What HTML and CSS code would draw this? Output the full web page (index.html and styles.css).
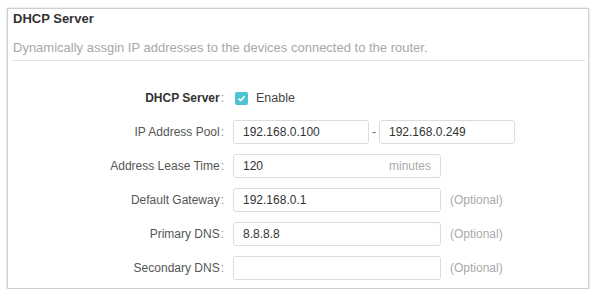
FILE: index.html
```html
<!DOCTYPE html>
<html lang="en">
<head>
  <meta charset="UTF-8" />
  <title>DHCP Server</title>
  <link rel="stylesheet" href="styles.css">
</head>
<body>
  <div class="panel">
    <h2 class="panel-title">DHCP Server</h2>
    <p class="panel-desc">Dynamically assgin IP addresses to the devices connected to the router.</p>
    <div class="form">
      <div class="row">
        <label class="lbl strong">DHCP Server<span class="colon">:</span></label>
        <div class="field">
          <span class="check">
            <svg width="9" height="9" viewBox="0 0 9 9"><path d="M1.5 4.6 L3.6 6.6 L7.6 2.3" fill="none" stroke="#fff" stroke-width="1.6"/></svg>
          </span>
          <span class="check-text">Enable</span>
        </div>
      </div>
      <div class="row">
        <label class="lbl">IP Address Pool<span class="colon">:</span></label>
        <div class="field">
          <span class="box short">192.168.0.100</span>
          <span class="dash">-</span>
          <span class="box short">192.168.0.249</span>
        </div>
      </div>
      <div class="row">
        <label class="lbl">Address Lease Time<span class="colon">:</span></label>
        <div class="field">
          <span class="box long">120<span class="unit">minutes</span></span>
        </div>
      </div>
      <div class="row">
        <label class="lbl">Default Gateway<span class="colon">:</span></label>
        <div class="field">
          <span class="box long">192.168.0.1</span>
          <span class="hint">(Optional)</span>
        </div>
      </div>
      <div class="row">
        <label class="lbl">Primary DNS<span class="colon">:</span></label>
        <div class="field">
          <span class="box long">8.8.8.8</span>
          <span class="hint">(Optional)</span>
        </div>
      </div>
      <div class="row">
        <label class="lbl">Secondary DNS<span class="colon">:</span></label>
        <div class="field">
          <span class="box long"></span>
          <span class="hint">(Optional)</span>
        </div>
      </div>
    </div>
  </div>
</body>
</html>
```

FILE: styles.css
```css
body {
  margin: 0;
  background: #fff;
  font-family: "Liberation Sans", Arial, sans-serif;
  font-size: 12px;
  color: #333;
}
.panel {
  margin: 8px 14px 0 7px;
  height: 279px;
  border: 1px solid #cfcfcf;
  box-shadow: 0 0 2px rgba(0,0,0,0.18);
}
.panel-title {
  margin: 0;
  padding: 1px 0 0 5px;
  height: 18px;
  line-height: 18px;
  font-size: 13px;
  font-weight: bold;
  color: #333;
}
.panel-desc {
  margin: 0 3px 0 5px;
  padding-top: 12px;
  height: 20px;
  line-height: 16px;
  font-size: 13px;
  color: #a8a8a8;
  border-bottom: 1px solid #e2e2e2;
}
.form {
  padding-top: 20px;
}
.row {
  display: flex;
  align-items: center;
  height: 34px;
}
.lbl {
  width: 216px;
  text-align: right;
  color: #555;
}
.lbl.strong {
  color: #333;
  font-weight: bold;
}
.colon {
  font-weight: normal;
  color: #888;
  margin-left: 1px;
}
.field {
  display: flex;
  align-items: center;
  margin-left: 9px;
}
.check {
  display: flex;
  align-items: center;
  justify-content: center;
  width: 13px;
  height: 13px;
  margin-left: 2px;
  border-radius: 2px;
  background: #4ec3d1;
}
.check-text {
  margin-left: 8px;
  font-size: 12.5px;
  color: #444;
}
.box {
  display: flex;
  align-items: center;
  box-sizing: border-box;
  height: 24px;
  padding: 0 9px;
  border: 1px solid #dcdcdc;
  border-radius: 3px;
  color: #333;
}
.box.short {
  width: 136px;
}
.box.long {
  width: 208px;
}
.dash {
  width: 10px;
  text-align: center;
  color: #666;
}
.unit {
  margin-left: auto;
  color: #aaa;
}
.hint {
  margin-left: 9px;
  color: #aaa;
}
```
